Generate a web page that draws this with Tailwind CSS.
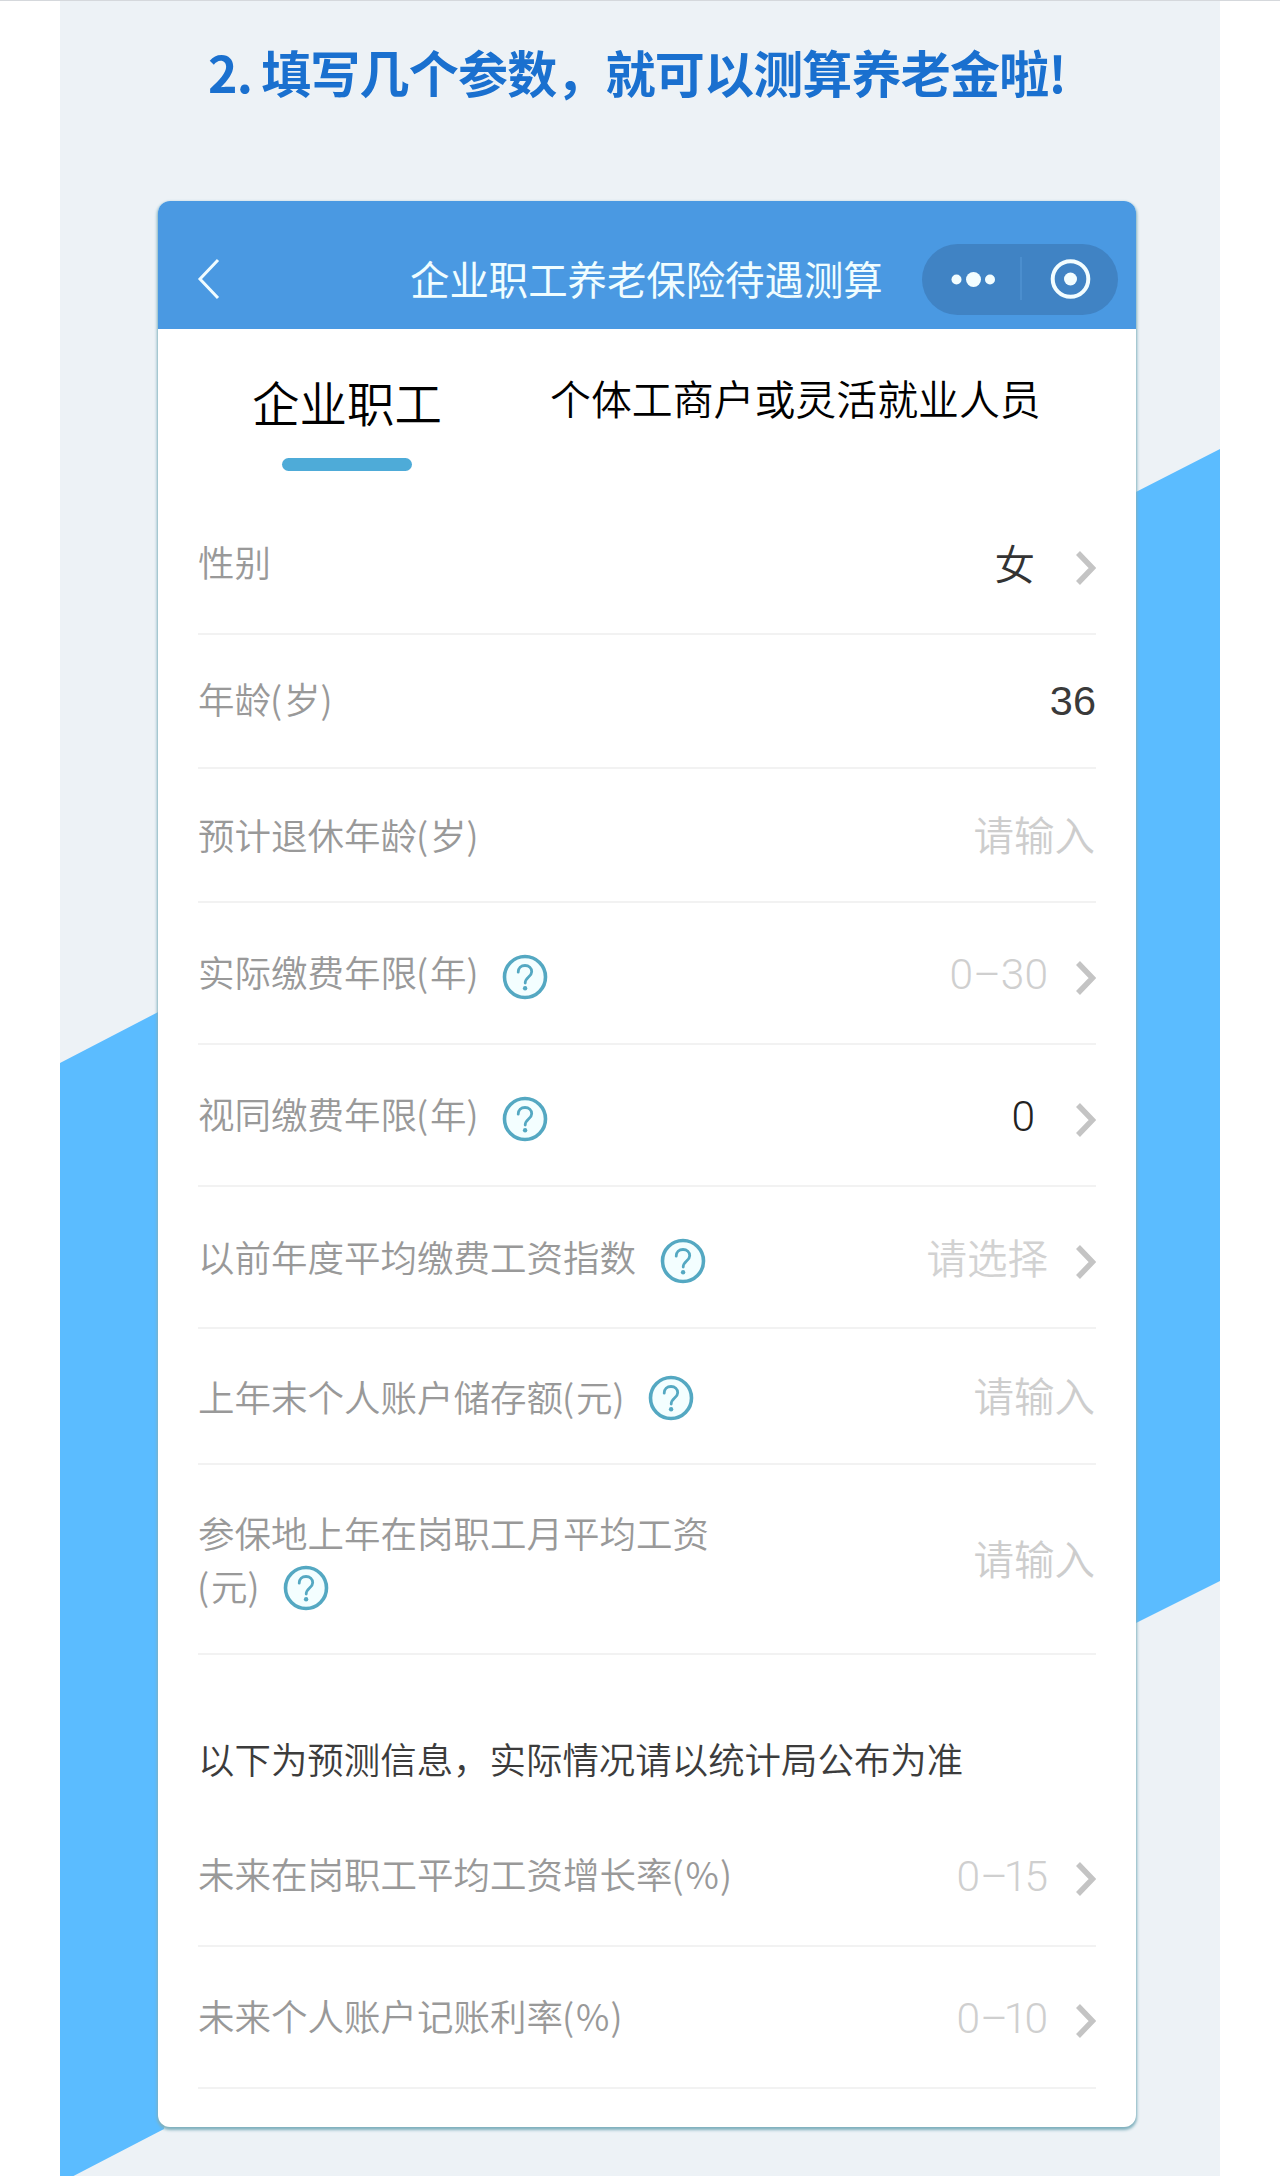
<!DOCTYPE html>
<html lang="zh-CN">
<head>
<meta charset="utf-8">
<title>养老金测算</title>
<script src="https://cdn.jsdelivr.net/npm/@tailwindcss/browser@4"></script>
</head>
<body class="bg-white font-['Noto_Sans_CJK_SC',sans-serif]">
<svg class="hidden">
  <symbol id="help" viewBox="0 0 46 46">
    <circle cx="23" cy="23" r="20.500" fill="#f3feff" stroke="#54a8c2" stroke-width="3.600"/>
    <path d="M16.200 18.200c0-4 2.900-6.700 6.800-6.700s6.700 2.500 6.700 6.200c0 5.200-6.500 5.600-6.500 11.300" fill="none" stroke="#54a8c2" stroke-width="2.800" stroke-linecap="round"/>
    <circle cx="23.100" cy="34.200" r="2.200" fill="#54a8c2"/>
  </symbol>
  <symbol id="next" viewBox="0 0 20 34">
    <path d="M2 2 16.500 17 2 32" fill="none" stroke="#c4c4c4" stroke-width="5.500"/>
  </symbol>
</svg>
<div class="h-[2176px] overflow-hidden border-t border-[#d5d8dc]">
  <div class="relative mx-auto h-full w-[1160px] bg-[#edf2f6]">
    <svg class="absolute inset-0 h-full w-full" viewBox="0 1 1160 2175">
      <path d="M0 1063 104 1009V2129L0 2183ZM1160 449 1070 495V1626L1160 1581Z" fill="#5bbcff"/>
    </svg>
    <div class="relative">
      <h1 class="flex h-[200px] items-start pt-[34px] pl-[148px] text-[50px] leading-[72px] font-bold tracking-[-0.800px] whitespace-pre text-[#1a70cf]"><span class="mr-[9px]">2.</span>填写几个参数，就可以测算养老金啦!</h1>

      <div class="ml-[98px] h-[1926px] w-[978px] overflow-hidden rounded-[12px] bg-white shadow-[0_2px_3px_1px_#7fb0bd]">
        <header class="flex h-[128px] items-center bg-[#4a99e2] pt-7 text-white">
          <svg class="ml-[38px] h-[42px] w-[26px]" viewBox="0 0 26 42"><path d="M22 2 4 21 22 40" fill="none" stroke="#f0fcff" stroke-width="3"/></svg>
          <div class="ml-[188px] w-[474px] pb-[2px] text-[39.400px] leading-[56px] whitespace-nowrap text-[#f0fdff]">企业职工养老保险待遇测算</div>
          <div class="ml-[38px] flex h-[71px] w-[196px] items-center rounded-full bg-[#4083c4]">
            <svg class="h-[71px] w-[196px]" viewBox="0 0 196 71" fill="#f2fdff">
              <circle cx="34.500" cy="35.500" r="5"/><circle cx="51.500" cy="35.500" r="7.500"/><circle cx="68" cy="35.500" r="5"/>
              <path d="M99 13V56" stroke="#4f92d2" stroke-width="1.500"/>
              <circle cx="148.500" cy="35" r="17.800" fill="none" stroke="#f2fdff" stroke-width="4"/><circle cx="148.500" cy="35" r="6.500"/>
            </svg>
          </div>
        </header>

        <nav class="flex h-[163px] font-[350] text-black">
          <div class="ml-[94px] flex w-[190px] flex-col items-center pt-[38px]">
            <div class="text-[47.500px] leading-[70px] whitespace-nowrap">企业职工</div>
            <div class="mt-[21px] h-[13px] w-[130px] rounded-full bg-[#4eabd8]"></div>
          </div>
          <div class="ml-[108px] pt-[39px] text-[40.900px] leading-[60px] whitespace-nowrap">个体工商户或灵活就业人员</div>
        </nav>

        <main class="mx-10 text-[36.500px] leading-[53px] font-[350] text-[#999]">
          <div class="flex h-[143px] items-center justify-between border-b-2 border-[#f2f2f2]">
            <div class="pb-[2px]">性别</div>
            <div class="flex items-center"><span class="mr-[41px] pb-px text-[40.500px] text-[#333]">女</span><svg class="mt-[10px] h-[34px] w-5"><use href="#next"/></svg></div>
          </div>
          <div class="flex h-[134px] items-center justify-between border-b-2 border-[#f2f2f2]">
            <div class="pb-[5px]">年龄<span class="-ml-px tracking-[2px]">(</span>岁<span>)</span></div>
            <div class="pb-[2px] font-['Liberation_Sans',sans-serif] text-[41.500px] font-normal text-[#3a3a3a]">36</div>
          </div>
          <div class="flex h-[134px] items-center justify-between border-b-2 border-[#f2f2f2]">
            <div class="pb-px">预计退休年龄<span class="-ml-px tracking-[2px]">(</span>岁<span>)</span></div>
            <div class="mr-px pb-1 text-[40.500px] text-[#cdcdcd]">请输入</div>
          </div>
          <div class="flex h-[142px] items-center justify-between border-b-2 border-[#f2f2f2]">
            <div class="flex items-center"><span class="pb-1">实际缴费年限<span class="-ml-px tracking-[2px]">(</span>年<span>)</span></span><svg class="mt-[8px] ml-[23px] h-[46px] w-[46px]"><use href="#help"/></svg></div>
            <div class="flex items-center"><span class="mr-[28px] pt-[2px] font-[Roboto,sans-serif] text-[42.500px] font-light text-[#cfcfcf]">0–30</span><svg class="mt-[10px] h-[34px] w-5"><use href="#next"/></svg></div>
          </div>
          <div class="flex h-[142px] items-center justify-between border-b-2 border-[#f2f2f2]">
            <div class="flex items-center"><span class="pb-1">视同缴费年限<span class="-ml-px tracking-[2px]">(</span>年<span>)</span></span><svg class="mt-[8px] ml-[23px] h-[46px] w-[46px]"><use href="#help"/></svg></div>
            <div class="flex items-center"><span class="mr-[41px] pt-[2px] font-[Roboto,sans-serif] text-[42.500px] font-light text-[#222]">0</span><svg class="mt-[10px] h-[34px] w-5"><use href="#next"/></svg></div>
          </div>
          <div class="flex h-[142px] items-center justify-between border-b-2 border-[#f2f2f2]">
            <div class="flex items-center"><span class="pb-[2px]">以前年度平均缴费工资指数</span><svg class="mt-[8px] ml-[24px] h-[46px] w-[46px]"><use href="#help"/></svg></div>
            <div class="flex items-center"><span class="mr-[28px] pb-[2px] text-[40.500px] text-[#d2d2d2]">请选择</span><svg class="mt-[10px] h-[34px] w-5"><use href="#next"/></svg></div>
          </div>
          <div class="flex h-[136px] items-center justify-between border-b-2 border-[#f2f2f2]">
            <div class="flex items-center"><span>上年末个人账户储存额<span class="-ml-px tracking-[2px]">(</span>元<span>)</span></span><svg class="mt-[4px] ml-[23px] h-[46px] w-[46px]"><use href="#help"/></svg></div>
            <div class="mr-px pb-[3px] text-[40.500px] text-[#cdcdcd]">请输入</div>
          </div>
          <div class="flex h-[190px] items-center justify-between border-b-2 border-[#f2f2f2]">
            <div>参保地上年在岗职工月平均工资<div class="flex items-center"><span><span class="-ml-px tracking-[2px]">(</span>元<span>)</span></span><svg class="mt-[4px] ml-[23px] h-[46px] w-[46px]"><use href="#help"/></svg></div></div>
            <div class="mr-px pb-[4px] text-[40.500px] text-[#cdcdcd]">请输入</div>
          </div>

          <p class="h-[150px] pt-[77px] text-[36.450px] whitespace-nowrap text-[#3c3c3c]">以下为预测信息，实际情况请以统计局公布为准</p>

          <div class="flex h-[142px] items-center justify-between border-b-2 border-[#f2f2f2]">
            <div class="pb-[3px]">未来在岗职工平均工资增长率<span class="-ml-px tracking-[2px]">(</span>%<span class="ml-px">)</span></div>
            <div class="flex items-center"><span class="mr-[28px] pt-[2px] font-[Roboto,sans-serif] text-[42.500px] font-light text-[#cfcfcf]">0<span class="tracking-[-4px]">–</span><span class="tracking-[-3px]">1</span>5</span><svg class="mt-[8px] h-[34px] w-5"><use href="#next"/></svg></div>
          </div>
          <div class="flex h-[142px] items-center justify-between border-b-2 border-[#f2f2f2]">
            <div class="pb-[3px]">未来个人账户记账利率<span class="-ml-px tracking-[2px]">(</span>%<span class="ml-px">)</span></div>
            <div class="flex items-center"><span class="mr-[28px] pt-[2px] font-[Roboto,sans-serif] text-[42.500px] font-light text-[#cfcfcf]">0<span class="tracking-[-4px]">–</span><span class="tracking-[-3px]">1</span>0</span><svg class="mt-[8px] h-[34px] w-5"><use href="#next"/></svg></div>
          </div>
        </main>
      </div>
    </div>
  </div>
</div>
</body>
</html>
